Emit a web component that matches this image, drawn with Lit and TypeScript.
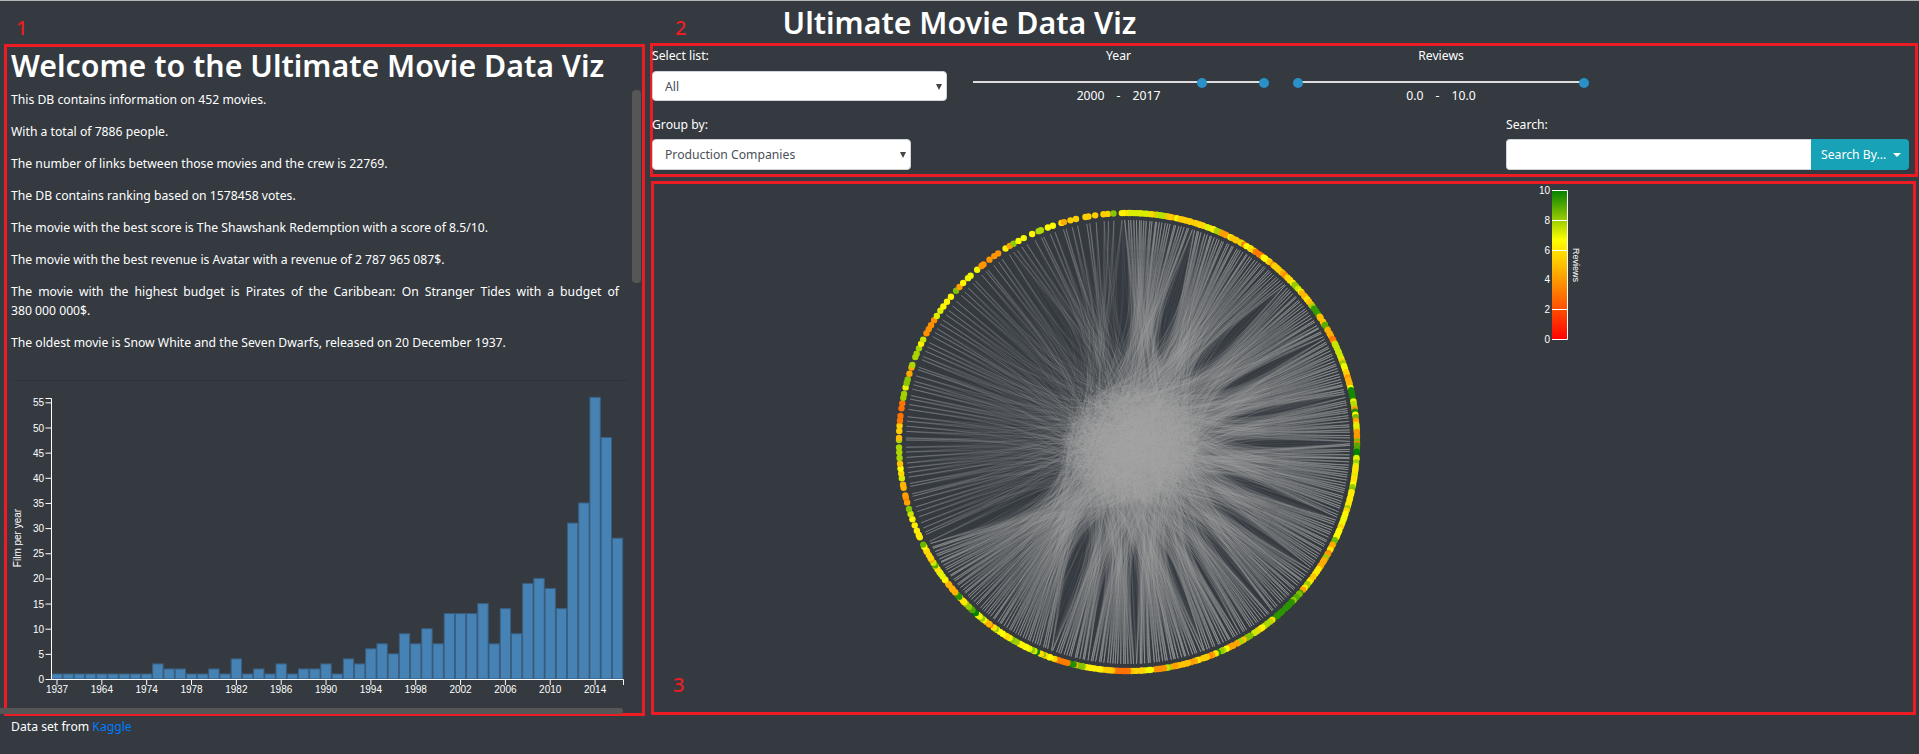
import { LitElement, css, html, svg } from 'lit'
import { customElement } from 'lit/decorators.js'

const FILMS = [1,1,1,1,1,1,1,1,1,3,2,2,1,1,2,1,4,1,2,1,3,1,2,2,3,1,4,3,6,7,5,9,7,10,7,13,13,13,15,7,14,9,19,20,18,14,31,35,56,48,28]
const YEARS = ['1937','1964','1974','1978','1982','1986','1990','1994','1998','2002','2006','2010','2014']

const STATS = [
  'This DB contains information on 452 movies.',
  'With a total of 7886 people.',
  'The number of links between those movies and the crew is 22769.',
  'The DB contains ranking based on 1578458 votes.',
  'The movie with the best score is The Shawshank Redemption with a score of 8.5/10.',
  'The movie with the best revenue is Avatar with a revenue of 2 787 965 087$.',
  'The movie with the highest budget is Pirates of the Caribbean: On Stranger Tides with a budget of 380\u00a0000\u00a0000$.',
  'The oldest movie is Snow White and the Seven Dwarfs, released on 20 December 1937.',
]

// arcs of the circle, clockwise from north: from, to, nodes, links per node, hub radius (0 = radial)
const ARCS = [
  [-1, 17, 26, 14, 0.46], [17, 45, 40, 15, 0.46], [45, 62, 24, 16, 0.44], [62, 78, 23, 16, 0.42],
  [78, 90, 17, 14, 0.4], [90, 110, 29, 15, 0.4], [110, 125, 21, 16, 0.42], [125, 140, 21, 18, 0.44],
  [140, 150, 14, 16, 0.44], [150, 160, 14, 18, 0.44], [160, 178, 25, 18, 0.44], [178, 190, 17, 16, 0.44],
  [190, 200, 14, 16, 0.44], [200, 243, 60, 15, 0.46], [243, 300, 43, 9, 0], [300, 328, 19, 9, 0], [328, 359, 20, 9, 0.48],
]

const CX = 1128
const CY = 442
const R = 229

function rng(seed: number) {
  return () => {
    seed = (seed + 0x6d2b79f5) | 0
    let t = Math.imul(seed ^ (seed >>> 15), 1 | seed)
    t = (t + Math.imul(t ^ (t >>> 7), 61 | t)) ^ t
    return ((t ^ (t >>> 14)) >>> 0) / 4294967296
  }
}

function reviewColor(v: number) {
  const mix = (a: number[], b: number[], t: number) =>
    `rgb(${a.map((c, i) => Math.round(c + (b[i] - c) * t)).join(',')})`
  if (v < 6.67) return mix([255, 0, 0], [255, 255, 0], v / 6.67)
  return mix([255, 255, 0], [0, 128, 0], (v - 6.67) / 3.33)
}

function polar(deg: number, r: number) {
  const a = (deg * Math.PI) / 180
  return [CX + Math.sin(a) * r, CY - Math.cos(a) * r]
}

function buildChord() {
  const rand = rng(452)
  const blob = () => {
    const a = rand() * Math.PI * 2
    const r = Math.sqrt(rand())
    return [CX + 2 + Math.cos(a) * r * 68, CY + Math.sin(a) * r * 58]
  }
  const f = (n: number) => n.toFixed(1)
  const links: string[] = []
  const core: string[] = []
  const dots: { x: number; y: number; c: string }[] = []
  let score = 6
  for (const [from, to, count, perNode, hubR] of ARCS) {
    const mid = (from + to) / 2
    for (let i = 0; i < count; i++) {
      const deg = from + ((i + 0.5 + (rand() - 0.5) * 0.7) / count) * (to - from)
      if (rand() > 0.45) {
        const u = rand() + rand() + rand() - 1.5
        score = Math.max(3, Math.min(10, 6.3 + u * 3.4))
      }
      const [x, y] = polar(deg, R)
      dots.push({ x, y, c: reviewColor(score) })
      const [sx, sy] = polar(deg, 222)
      for (let k = 0; k < perNode; k++) {
        // a share of the links leaves the bundle and runs almost straight to the core
        const loose = !hubR || rand() < 0.08
        const [ax, ay] = loose
          ? polar(deg + (rand() - 0.5) * 2.5, 135)
          : polar(mid + (deg - mid) * 0.68 + (rand() - 0.5) * 2.5, 135)
        const [bx, by] = loose
          ? polar(deg + (rand() - 0.5) * 8, 75)
          : polar(mid + (deg - mid) * 0.2 + (rand() - 0.5) * 6, R * hubR)
        const [ex, ey] = blob()
        links.push(`M${f(sx)} ${f(sy)}C${f(ax)} ${f(ay)} ${f(bx)} ${f(by)} ${f(ex)} ${f(ey)}`)
      }
    }
  }
  for (let i = 0; i < 350; i++) {
    const [ax, ay] = blob()
    const [bx, by] = blob()
    const [cx, cy] = blob()
    core.push(`M${f(ax)} ${f(ay)}Q${f(cx)} ${f(cy)} ${f(bx)} ${f(by)}`)
  }
  return { links, core, dots }
}

const CHORD = buildChord()

@customElement('range-slider')
export class RangeSlider extends LitElement {
  static properties = {
    label: { type: String },
    min: { type: Number },
    max: { type: Number },
    low: { type: Number },
    high: { type: Number },
    digits: { type: Number },
  }

  label = ''
  min = 0
  max = 10
  low = 0
  high = 10
  digits = 0

  render() {
    const pct = (v: number) => ((v - this.min) / (this.max - this.min)) * 100
    return html`
      <div class="label">${this.label}</div>
      <div class="track">
        <span class="handle" style="left:${pct(this.low)}%"></span>
        <span class="handle" style="left:${pct(this.high)}%"></span>
      </div>
      <div class="values">
        <span>${this.low.toFixed(this.digits)}</span><span>-</span><span>${this.high.toFixed(this.digits)}</span>
      </div>
    `
  }

  static styles = css`
    :host {
      display: block;
      color: #fff;
      text-align: center;
    }
    .label {
      line-height: 19px;
    }
    .track {
      position: relative;
      height: 2px;
      margin-top: 16px;
      background: #ddd;
    }
    .handle {
      position: absolute;
      top: -3px;
      width: 10px;
      height: 10px;
      margin-left: -5px;
      border-radius: 50%;
      background: #2b90c8;
    }
    .values {
      display: flex;
      justify-content: center;
      gap: 12px;
      margin-top: 3px;
      line-height: 19px;
    }
  `
}

@customElement('app-root')
export class AppRoot extends LitElement {
  private barChart() {
    const y = (v: number) => 679 - v * 5.03
    return svg`
      <g class="bars">
        ${FILMS.map((v, i) => svg`<rect x=${51.8 + i * 11.21} y=${y(v)} width="10.4" height=${v * 5.03}></rect>`)}
      </g>
      <path class="axis" d="M45.5 398.5H51.5V679.5H623.5V685"></path>
      <g class="tick">
        ${Array.from({ length: 12 }, (_, i) => i * 5).map(v => svg`
          <line x1="45.5" x2="51.5" y1=${y(v) + 0.5} y2=${y(v) + 0.5}></line>
          <text x="44" y=${y(v) + 4} text-anchor="end">${v}</text>
        `)}
        ${YEARS.map((t, i) => svg`
          <line x1=${57 + i * 44.84} x2=${57 + i * 44.84} y1="679" y2="685"></line>
          <text x=${57 + i * 44.84} y="693" text-anchor="middle">${t}</text>
        `)}
        <text transform="translate(21 538) rotate(-90)" text-anchor="middle">Film per year</text>
      </g>
    `
  }

  private chord() {
    return svg`
      <defs>
        <linearGradient id="reviews" x1="0" y1="1" x2="0" y2="0">
          <stop offset="0" stop-color="#f00"></stop>
          <stop offset="0.667" stop-color="#ff0"></stop>
          <stop offset="1" stop-color="#008000"></stop>
        </linearGradient>
      </defs>
      <g class="links">${CHORD.links.map(d => svg`<path d=${d}></path>`)}</g>
      <g class="links core">${CHORD.core.map(d => svg`<path d=${d}></path>`)}</g>
      <g>${CHORD.dots.map(n => svg`<circle cx=${n.x} cy=${n.y} r="3.2" fill=${n.c}></circle>`)}</g>
      <rect x="1552" y="190" width="15" height="150" fill="url(#reviews)"></rect>
      <path class="legend-line" d="M1552 190.5H1567.5V339.5H1552M1552 220.5H1567M1552 250.5H1567M1552 309.5H1567"></path>
      <g class="tick">
        ${[10, 8, 6, 4, 2, 0].map((v, i) => svg`<text x="1550" y=${194 + i * 29.8} text-anchor="end">${v}</text>`)}
        <text class="small" transform="translate(1573 265) rotate(90)" text-anchor="middle">Reviews</text>
      </g>
    `
  }

  render() {
    return html`
      <h1 class="title">Ultimate Movie Data Viz</h1>
      <span class="mark one">1</span>
      <span class="mark two">2</span>
      <span class="mark three">3</span>
      <div class="page">
        <section class="frame intro">
          <h2>Welcome to the Ultimate Movie Data Viz</h2>
          ${STATS.map(t => html`<p>${t}</p>`)}
          <hr />
          <svg class="hist" viewBox="7 381 620 325" width="620" height="325">${this.barChart()}</svg>
          <span class="thumb-v"></span>
        </section>
        <div class="right">
          <section class="frame controls">
            <div class="row top">
              <div class="field first">
                <label>Select list:</label>
                <div class="select"><select><option>All</option></select></div>
              </div>
              <range-slider class="year" label="Year" min="1937" max="2017" low="2000" high="2017"></range-slider>
              <range-slider class="rev" label="Reviews" min="0" max="10" low="0" high="10" digits="1"></range-slider>
            </div>
            <div class="row second">
              <div class="field group">
                <label>Group by:</label>
                <div class="select tall"><select><option>Production Companies</option></select></div>
              </div>
              <div class="field search">
                <label>Search:</label>
                <div class="input-group">
                  <input type="text" />
                  <button>Search By...<i class="caret"></i></button>
                </div>
              </div>
            </div>
          </section>
          <section class="frame graph">
            <svg class="chord" viewBox="654 184 1258 527" width="1258" height="527">${this.chord()}</svg>
          </section>
        </div>
      </div>
      <span class="thumb-h"></span>
      <footer>Data set from <a href="#">Kaggle</a></footer>
    `
  }

  static styles = css`
    :host {
      display: block;
      position: relative;
      width: 1919px;
      height: 754px;
      overflow: hidden;
      box-sizing: border-box;
      border-top: 1px solid #b5b5b5;
      background: #343a40;
      color: #fff;
      font-family: "Noto Sans", "Open Sans", sans-serif;
      font-size: 12.2px;
    }
    * {
      box-sizing: border-box;
    }
    .title {
      height: 42px;
      margin: 0;
      text-align: center;
      font-size: 30.3px;
      font-weight: 600;
      line-height: 44px;
    }
    .mark {
      position: absolute;
      top: 13px;
      color: #ed1c24;
      font-size: 20px;
      font-weight: 500;
      line-height: 27px;
      z-index: 3;
    }
    .one { left: 16px; }
    .two { left: 675px; }
    .three { left: 673px; top: 670px; }
    .page {
      display: grid;
      grid-template-columns: 641px 1fr;
      gap: 5px;
      padding-left: 4px;
    }
    .frame {
      border: 3px solid #ed1c24;
    }
    .intro {
      position: relative;
      height: 672px;
      margin-top: 1px;
      padding-left: 4px;
    }
    .intro h2 {
      margin: 0 0 5px;
      font-size: 30.3px;
      font-weight: 600;
      line-height: 38px;
    }
    .intro p {
      width: 608px;
      margin: 0 0 12.8px;
      line-height: 19.2px;
      text-align: justify;
    }
    .intro hr {
      width: 617px;
      height: 1px;
      margin: 28px 0 0;
      border: 0;
      background: #2f343a;
    }
    .hist {
      display: block;
      margin-left: -4px;
    }
    .bars rect {
      fill: #4682b4;
      stroke: #3a5f80;
      stroke-width: 1;
    }
    .axis {
      fill: none;
      stroke: #fff;
    }
    .tick line {
      stroke: #fff;
    }
    .tick text {
      fill: #fff;
      font-family: "Liberation Sans", sans-serif;
      font-size: 10px;
    }
    .tick .small {
      font-size: 9px;
    }
    .thumb-v {
      position: absolute;
      left: 625px;
      top: 43px;
      width: 9px;
      height: 193px;
      border-radius: 4px;
      background: #565656;
    }
    .thumb-h {
      position: absolute;
      left: 0;
      top: 707px;
      width: 623px;
      height: 6px;
      border-radius: 0 4px 4px 0;
      background: #565656;
    }
    .right {
      display: flex;
      flex-direction: column;
      gap: 4px;
    }
    .controls {
      height: 134px;
      margin-right: 1px;
    }
    .row {
      display: flex;
      margin-left: -1px;
    }
    .top {
      height: 55px;
    }
    .second {
      justify-content: space-between;
      margin-top: 14px;
      padding-right: 6px;
    }
    label {
      display: block;
      margin-bottom: 5px;
      line-height: 19px;
    }
    .top label {
      margin-bottom: 6px;
    }
    .first { width: 295px; }
    .group { width: 259px; }
    .search { width: 403px; }
    .year { width: 291px; margin-left: 26px; }
    .rev { width: 286px; margin-left: 34px; }
    .select {
      position: relative;
      height: 30px;
    }
    .select.tall { height: 31px; }
    .select::after {
      content: "";
      position: absolute;
      right: 5px;
      top: 13px;
      border: 3px solid transparent;
      border-top: 6px solid #444;
      border-bottom: 0;
    }
    select {
      width: 100%;
      height: 100%;
      padding: 0 12px;
      appearance: none;
      border: 1px solid #ced4da;
      border-radius: 4px;
      background: #fff;
      color: #495057;
      font: inherit;
    }
    .input-group {
      display: flex;
      height: 31px;
    }
    input {
      flex: 1;
      min-width: 0;
      border: 1px solid #ced4da;
      border-right: 0;
      border-radius: 4px 0 0 4px;
      background: #fff;
    }
    button {
      display: flex;
      align-items: center;
      gap: 7px;
      width: 98px;
      padding: 0 0 0 10px;
      border: 0;
      border-radius: 0 4px 4px 0;
      background: #17a2b8;
      color: #fff;
      font: inherit;
    }
    .caret {
      border: 4px solid transparent;
      border-top-color: #fff;
      border-bottom: 0;
    }
    .graph {
      height: 534px;
      margin: 0 3px 0 1px;
    }
    .chord {
      display: block;
    }
    .links path {
      fill: none;
      stroke: #a4a4a4;
      stroke-width: 0.7;
      stroke-opacity: 0.13;
    }
    .links.core path {
      stroke-opacity: 0.2;
    }
    .legend-line {
      fill: none;
      stroke: #fff;
    }
    footer {
      margin: 1px 0 0 11px;
      line-height: 19px;
    }
    a {
      color: #007bff;
      text-decoration: none;
    }
  `
}
